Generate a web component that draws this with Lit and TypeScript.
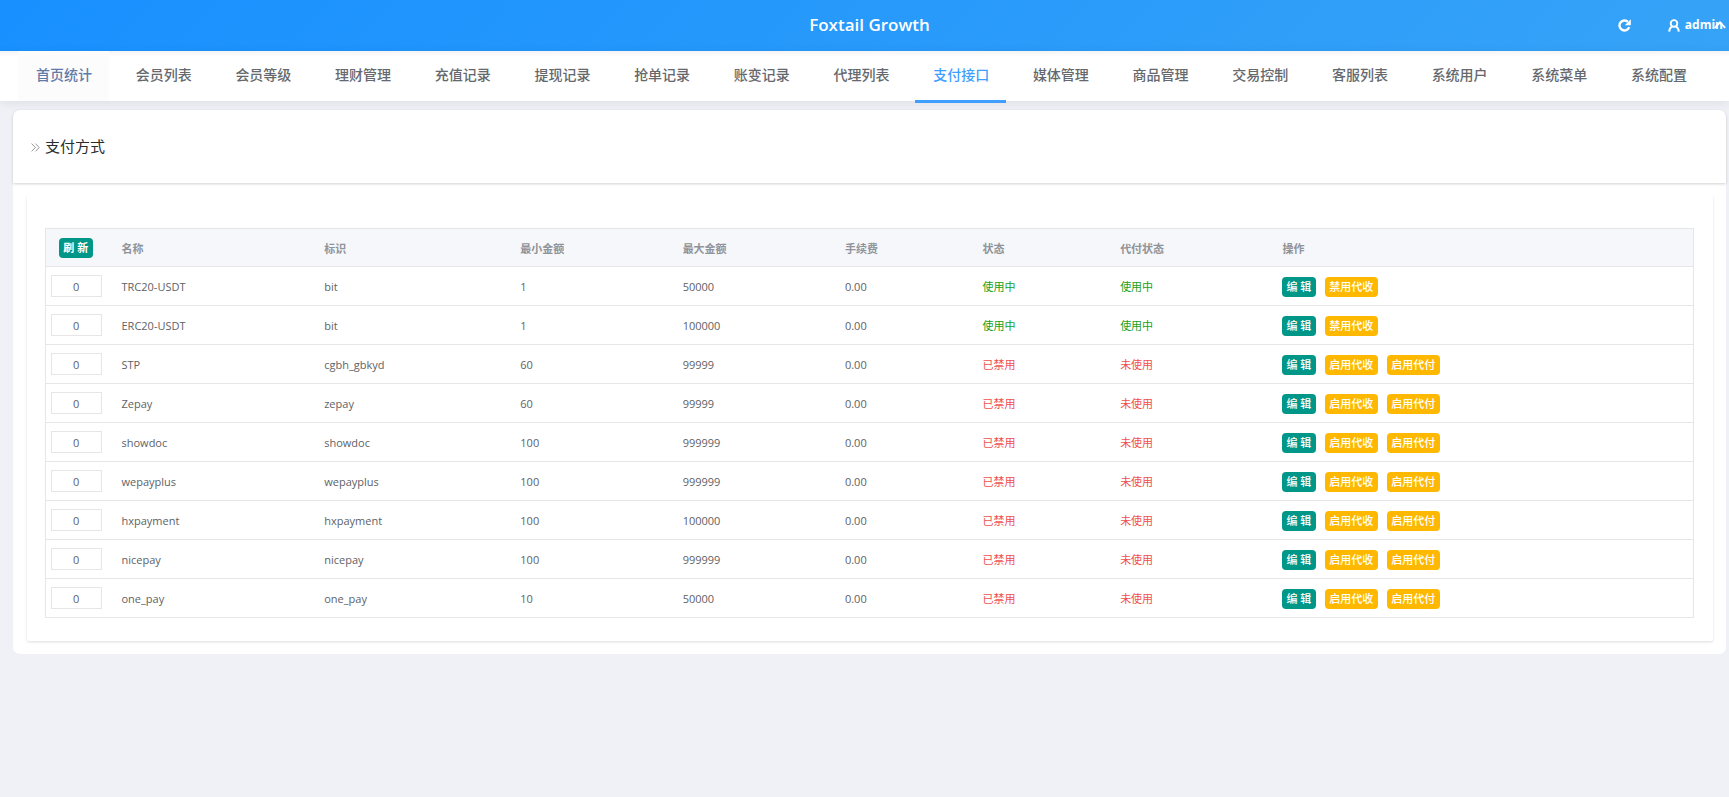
import { LitElement, html, css } from "lit";
import { customElement, state } from "lit/decorators.js";

interface Channel {
  sort: number;
  name: string;
  code: string;
  min: number;
  max: number;
  active: boolean;
}

const NAV = [
  "首页统计", "会员列表", "会员等级", "理财管理", "充值记录", "提现记录",
  "抢单记录", "账变记录", "代理列表", "支付接口", "媒体管理", "商品管理",
  "交易控制", "客服列表", "系统用户", "系统菜单", "系统配置",
];

const CHANNELS: Channel[] = [
  { sort: 0, name: "TRC20-USDT", code: "bit", min: 1, max: 50000, active: true },
  { sort: 0, name: "ERC20-USDT", code: "bit", min: 1, max: 100000, active: true },
  { sort: 0, name: "STP", code: "cgbh_gbkyd", min: 60, max: 99999, active: false },
  { sort: 0, name: "Zepay", code: "zepay", min: 60, max: 99999, active: false },
  { sort: 0, name: "showdoc", code: "showdoc", min: 100, max: 999999, active: false },
  { sort: 0, name: "wepayplus", code: "wepayplus", min: 100, max: 999999, active: false },
  { sort: 0, name: "hxpayment", code: "hxpayment", min: 100, max: 100000, active: false },
  { sort: 0, name: "nicepay", code: "nicepay", min: 100, max: 999999, active: false },
  { sort: 0, name: "one_pay", code: "one_pay", min: 10, max: 50000, active: false },
];

@customElement("app-header")
class AppHeader extends LitElement {
  static styles = css`
    :host { display: block; }
    .bar {
      display: grid;
      grid-template-columns: 1fr auto 1fr;
      align-items: center;
      height: 51px;
      color: #fff;
      background: linear-gradient(135deg, #1890ff, #36a3f7);
    }
    .title { grid-column: 2; margin: 0; padding: 0 0 2px 10px; font-size: 17px; font-weight: 600; line-height: 24px; }
    .tools { display: flex; justify-content: flex-end; align-items: center; padding-bottom: 1px; }
    .tool {
      border: 0; background: none; color: inherit; cursor: pointer;
      padding: 0; margin-right: 37px; display: flex;
    }
    .user {
      position: relative; display: flex; align-items: center; gap: 5px;
      color: inherit; text-decoration: none;
      font-size: 12px; font-weight: 700; line-height: 16px; padding-right: 6px;
    }
    .arrow { position: absolute; right: 3px; top: 4px; }
    svg { display: block; }
  `;
  render() {
    return html`
      <header class="bar">
        <h1 class="title">Foxtail Growth</h1>
        <div class="tools">
          <button class="tool" aria-label="刷新页面">
            <svg width="13" height="13" viewBox="0 0 13 13" fill="none">
              <path d="M11.2 8.2A5 5 0 1 1 10 2.9" stroke="#fff" stroke-width="2.4" />
              <path d="M12.8 .2V6.2H6.8Z" fill="#fff" />
            </svg>
          </button>
          <a class="user" href="#user">
            <svg width="12" height="13" viewBox="0 0 12 13" fill="none" stroke="#fff" stroke-width="1.9">
              <circle cx="6" cy="4.4" r="3.3" />
              <path d="M1.2 12.6C1.3 9.8 2.4 8.4 4.3 7.4M7.7 7.4C9.6 8.4 10.7 9.8 10.8 12.6" />
            </svg>
            admin
            <svg class="arrow" width="12" height="8" viewBox="0 0 12 8" fill="none" stroke="#fff" stroke-width="1.9">
              <path d="M.8 6.8 6 1.4l5.2 5.4" />
            </svg>
          </a>
        </div>
      </header>
    `;
  }
}

@customElement("app-nav")
class AppNav extends LitElement {
  @state() current = "支付接口";
  static styles = css`
    :host { display: block; }
    .nav {
      display: flex; justify-content: space-between;
      height: 50px; padding: 0 25px 0 18px;
      background: linear-gradient(#f4f4f4, #fff 6px);
      box-shadow: 0 2px 10px rgba(0, 0, 0, 0.08);
    }
    .item {
      box-sizing: border-box; height: 52px; padding: 0 17px 0 18px;
      color: #65686c; text-decoration: none;
      font-size: 14px; font-weight: 500; line-height: 48px; white-space: nowrap;
      border-bottom: 3px solid transparent;
    }
    .home { height: 50px; color: #5f7ba8; background: #fcfcfd; border-bottom: 0; }
    .on { color: #409eff; border-bottom-color: #409eff; }
  `;
  render() {
    return html`
      <nav class="nav">
        ${NAV.map((label, i) => html`
          <a class="item ${i === 0 ? "home" : ""} ${label === this.current ? "on" : ""}"
            href="#${i}" @click=${() => (this.current = label)}>${label}</a>`)}
      </nav>
    `;
  }
}

@customElement("channel-table")
class ChannelTable extends LitElement {
  static styles = css`
    :host { display: block; }
    .table {
      width: 100%; table-layout: fixed; border-collapse: collapse;
      font-size: 11px; line-height: 16px; color: #606266;
    }
    .c-sort { width: 61px; }
    .c-name { width: 12.3%; }
    .c-code { width: 11.9%; }
    .c-sum { width: 9.85%; }
    .c-state { width: 8.35%; }
    .table, .row { border: 1px solid #e6e6e6; }
    .row { height: 39px; }
    .head { height: 38px; background: #f5f7fa; color: #909399; }
    .cell { padding: 2px 15px 0; text-align: left; font-weight: 400; white-space: nowrap; }
    .head .cell { font-weight: 700; }
    .table .pick { padding: 0 5px; text-align: center; }
    .sort {
      box-sizing: border-box; display: block; width: 100%; height: 22px; padding: 0;
      border: 1px solid #e6e6e6; background: #fff;
      font: inherit; color: inherit; text-align: center;
    }
    .good { color: #1aa01a; }
    .bad { color: #f04f4f; }
    .actions { display: flex; gap: 9px; }
    .btn {
      height: 20px; padding: 0 5px 0 4px; border: 0; border-radius: 4px;
      font: inherit; line-height: 20px; font-weight: 500; color: #fff; background: #ffb800; cursor: pointer;
    }
    .green { background: #009688; }
    .strong { font-weight: 700; }
  `;
  render() {
    return html`
      <table class="table">
        <colgroup>
          <col class="c-sort" /><col class="c-name" /><col class="c-code" />
          <col class="c-sum" /><col class="c-sum" /><col class="c-state" />
          <col class="c-state" /><col class="c-sum" /><col />
        </colgroup>
        <thead>
          <tr class="row head">
            <th class="cell pick"><button class="btn green strong">刷 新</button></th>
            ${["名称", "标识", "最小金额", "最大金额", "手续费", "状态", "代付状态", "操作"].map(
              (t) => html`<th class="cell">${t}</th>`)}
          </tr>
        </thead>
        <tbody>
          ${CHANNELS.map((c) => html`
            <tr class="row">
              <td class="cell pick"><input class="sort" aria-label="排序 ${c.name}" .value=${String(c.sort)} /></td>
              <td class="cell">${c.name}</td>
              <td class="cell">${c.code}</td>
              <td class="cell">${c.min}</td>
              <td class="cell">${c.max}</td>
              <td class="cell">0.00</td>
              <td class="cell ${c.active ? "good" : "bad"}">${c.active ? "使用中" : "已禁用"}</td>
              <td class="cell ${c.active ? "good" : "bad"}">${c.active ? "使用中" : "未使用"}</td>
              <td class="cell">
                <div class="actions">
                  <button class="btn green">编 辑</button>
                  <button class="btn">${c.active ? "禁用代收" : "启用代收"}</button>
                  ${c.active ? "" : html`<button class="btn">启用代付</button>`}
                </div>
              </td>
            </tr>`)}
        </tbody>
      </table>
    `;
  }
}

@customElement("app-root")
class AppRoot extends LitElement {
  static styles = css`
    :host {
      display: block; min-height: 100vh; background: #f0f1f6;
      font-family: "Open Sans", "Noto Sans CJK SC", sans-serif;
    }
    .card { margin: 9px 3px 0 13px; background: #fff; border-radius: 7px; padding-bottom: 13px; }
    .head {
      display: flex; align-items: center; gap: 5px;
      height: 73px; padding: 0 18px 2px; box-sizing: border-box;
      border-radius: 7px 7px 0 0;
      box-shadow: 0 1px 3px rgba(0, 0, 0, 0.18);
    }
    .mark { margin-top: 3px; }
    .title { margin: 0; font-size: 15px; font-weight: 400; line-height: 20px; color: #2a2c30; }
    .box {
      margin: 13px 13px 0 14px; padding: 32px 19px 23px 18px;
      border-radius: 2px; box-shadow: 0 1px 3px rgba(0, 0, 0, 0.14);
      clip-path: inset(0 -4px -5px -4px);
    }
  `;
  render() {
    return html`
      <app-header></app-header>
      <app-nav></app-nav>
      <main class="card">
        <div class="head">
          <svg class="mark" width="9" height="9" viewBox="0 0 9 9" fill="none" stroke="#999">
            <path d="M.6 .6 4.4 4.5.6 8.4M4.4.6 8.2 4.5 4.4 8.4" />
          </svg>
          <h2 class="title">支付方式</h2>
        </div>
        <section class="box"><channel-table></channel-table></section>
      </main>
    `;
  }
}
